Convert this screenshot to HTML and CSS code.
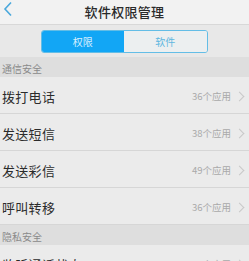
FILE: index.html
```html
<!DOCTYPE html>
<html lang="zh">
<head>
<meta charset="utf-8">
<link rel="stylesheet" href="styles.css">
</head>
<body>
<div class="app">
  <header class="topbar">
    <svg class="back" width="10" height="16" viewBox="0 0 10 16"><path d="M8 1.5 L2 8 L8 14.5" fill="none" stroke="#4aa8dc" stroke-width="1.6"/></svg>
    <div class="title">软件权限管理</div>
  </header>
  <div class="segband">
    <div class="seg">
      <div class="seg-item active">权限</div>
      <div class="seg-item">软件</div>
    </div>
  </div>
  <div class="section">通信安全</div>
  <div class="row"><span class="label">拨打电话</span><span class="count">36个应用</span><span class="chev"></span></div>
  <div class="row"><span class="label">发送短信</span><span class="count">38个应用</span><span class="chev"></span></div>
  <div class="row"><span class="label">发送彩信</span><span class="count">49个应用</span><span class="chev"></span></div>
  <div class="row"><span class="label">呼叫转移</span><span class="count">36个应用</span><span class="chev"></span></div>
  <div class="section">隐私安全</div>
  <div class="row"><span class="label">监听通话状态</span><span class="count">36个应用</span><span class="chev"></span></div>
</div>
</body>
</html>
```
FILE: styles.css
```css
html, body {
  margin: 0;
  padding: 0;
  background: #ebebeb;
  font-family: "Noto Sans CJK SC", "Noto Sans", sans-serif;
  overflow: hidden;
}
.app {
  width: 249px;
  height: 261px;
  display: flex;
  flex-direction: column;
  overflow: hidden;
}
.topbar {
  height: 24px;
  flex: none;
  position: relative;
  background: #f2f2f2;
  border-bottom: 1px solid #d8d8d8;
  display: flex;
  align-items: center;
  justify-content: center;
}
.back {
  position: absolute;
  left: 3px;
  top: 1px;
}
.title {
  font-size: 13px;
  font-weight: 500;
  color: #2a2a2a;
  letter-spacing: 0.3px;
  line-height: 24px;
}
.segband {
  height: 32px;
  flex: none;
  background: #e8e8e8;
  display: flex;
  align-items: center;
  justify-content: center;
}
.seg {
  width: 167px;
  height: 23px;
  display: flex;
  border: 1px solid #63bde6;
  border-radius: 3px;
  box-sizing: border-box;
  overflow: hidden;
  margin-top: 1px;
  margin-left: -1px;
}
.seg-item {
  flex: 1;
  display: flex;
  align-items: center;
  justify-content: center;
  font-size: 10px;
  color: #5fb7e0;
  background: #eceff0;
}
.seg-item.active {
  background: #12a6f5;
  color: #d8f0ff;
}
.section {
  height: 20px;
  flex: none;
  background: #dedede;
  font-size: 10px;
  color: #8a8a8a;
  padding-left: 2px;
  display: flex;
  align-items: center;
  padding-top: 2px;
  box-sizing: border-box;
}
.row {
  height: 37px;
  flex: none;
  box-sizing: border-box;
  background: #ebebeb;
  border-bottom: 1px solid #d6d6d6;
  display: flex;
  align-items: center;
  padding: 2px 6px 0 2px;
}
.label {
  font-size: 13px;
  color: #2b2b2b;
  letter-spacing: 0.3px;
  flex: 1;
}
.count {
  font-size: 9.5px;
  color: #a9a9a9;
}
.chev {
  width: 6px;
  height: 6px;
  border-top: 1px solid #c8c8c8;
  border-right: 1px solid #c8c8c8;
  transform: rotate(45deg);
  margin-left: 5px;
}
```
